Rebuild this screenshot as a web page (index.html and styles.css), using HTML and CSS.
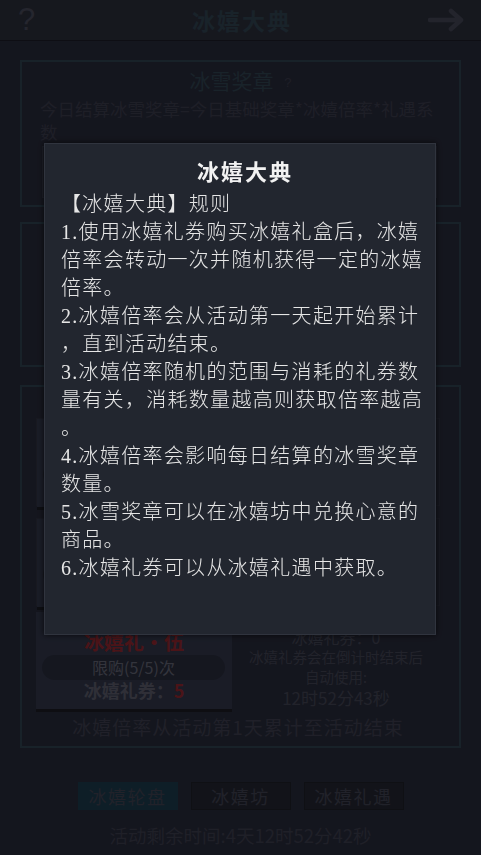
FILE: index.html
```html
<!DOCTYPE html>
<html lang="zh-CN">
<head>
    <meta charset="UTF-8">
    <meta name="viewport" content="width=device-width, initial-scale=1.0">
    <title>冰嬉大典</title>
    <link rel="stylesheet" href="styles.css">
</head>
<body>

    <div class="page">
        <div class="topbar">
            <span class="help">?</span>
            <h1 class="topbar-title">冰嬉大典</h1>
            <svg class="next" width="38" height="24" viewBox="0 0 38 24">
                <path d="M2 12 H33 M23 3 L33 12 L23 21" fill="none" stroke="currentColor" stroke-width="4.5" stroke-linecap="round" stroke-linejoin="round"/>
            </svg>
        </div>

        <div class="card medal">
            <div class="card-title">冰雪奖章 <span class="tip">?</span></div>
            <p class="formula">今日结算冰雪奖章=今日基础奖章*冰嬉倍率*礼遇系数</p>
            <div class="medal-box">今日基础奖章：120　冰嬉倍率：1.35</div>
        </div>

        <div class="card rate">
            <div class="card-title">冰嬉倍率</div>
            <div class="rate-value">x1.35</div>
            <div class="rate-note">今日可获得冰雪奖章：162</div>
        </div>

        <div class="card gifts">
            <div class="card-title">冰嬉礼盒</div>

            <div class="row sold">
                <div class="item">
                    <div class="item-name">冰嬉礼·壹</div>
                    <div class="item-limit">限购(1/1)次</div>
                    <div class="item-price">冰嬉礼券：<span class="red">1</span></div>
                </div>
                <div class="info">已购买</div>
            </div>

            <div class="row sold">
                <div class="item">
                    <div class="item-name">冰嬉礼·叁</div>
                    <div class="item-limit">限购(3/3)次</div>
                    <div class="item-price">冰嬉礼券：<span class="red">3</span></div>
                </div>
                <div class="info">已购买</div>
            </div>

            <div class="row">
                <div class="item">
                    <div class="item-name">冰嬉礼·伍</div>
                    <div class="item-limit">限购(5/5)次</div>
                    <div class="item-price">冰嬉礼券：<span class="red">5</span></div>
                </div>
                <div class="info">
                    <div>冰嬉礼券：0</div>
                    <div class="small">冰嬉礼券会在倒计时结束后</div>
                    <div class="small">自动使用:</div>
                    <div class="timer">12时52分43秒</div>
                </div>
            </div>

            <div class="gifts-note">冰嬉倍率从活动第1天累计至活动结束</div>
        </div>

        <div class="tabs">
            <div class="tab active">冰嬉轮盘</div>
            <div class="tab">冰嬉坊</div>
            <div class="tab">冰嬉礼遇</div>
        </div>

        <div class="countdown">活动剩余时间:4天12时52分42秒</div>
    </div>

    <div class="mask">
        <div class="dialog">
            <h2>冰嬉大典</h2>
            <div class="rules">
                <p>【冰嬉大典】规则</p>
                <p>1.使用冰嬉礼券购买冰嬉礼盒后，冰嬉倍率会转动一次并随机获得一定的冰嬉倍率。</p>
                <p>2.冰嬉倍率会从活动第一天起开始累计，直到活动结束。</p>
                <p>3.冰嬉倍率随机的范围与消耗的礼券数量有关，消耗数量越高则获取倍率越高。</p>
                <p>4.冰嬉倍率会影响每日结算的冰雪奖章数量。</p>
                <p>5.冰雪奖章可以在冰嬉坊中兑换心意的商品。</p>
                <p>6.冰嬉礼券可以从冰嬉礼遇中获取。</p>
            </div>
        </div>
    </div>

</body>
</html>
```

FILE: styles.css
```css
body {
    margin: 0;
    background-color: #34374b;
    font-family: "Noto Sans CJK SC", sans-serif;
    color: #4c4e63;
}
.page {
    height: 855px;
    overflow: hidden;
}

/* top bar */
.topbar {
    height: 40px;
    border-bottom: 1px solid #232532;
    background-color: #393c4d;
    display: grid;
    grid-template-columns: 1fr auto 1fr;
    align-items: center;
    padding: 0 15px 0 18px;
}
.help {
    justify-self: start;
    font-family: "Liberation Sans", sans-serif;
    font-size: 31px;
    line-height: 40px;
    color: #5c5f73;
}
.topbar-title {
    margin: 0;
    font-size: 23px;
    font-weight: bold;
    letter-spacing: 2px;
    color: #3f5769;
}
.next {
    justify-self: end;
    color: #585b6f;
}

/* cards */
.card {
    box-sizing: border-box;
    margin: 0 20px;
    border: 2px solid #3c5668;
}
.card-title {
    text-align: center;
    font-size: 21px;
    line-height: 24px;
    color: #3f5769;
}
.tip {
    font-family: "Liberation Sans", sans-serif;
    font-size: 13px;
    vertical-align: middle;
    margin-left: 6px;
    color: #4c4e63;
}
.medal {
    margin-top: 19px;
    height: 147px;
    padding: 6px 18px 0;
}
.formula {
    margin: 2px 0 0;
    font-size: 17.5px;
    line-height: 23px;
}
.medal-box {
    margin: 3px 4px 0 2px;
    height: 50px;
    line-height: 50px;
    text-align: center;
    background-color: #3e4257;
    border: 1px solid #4a4e66;
}
.rate {
    margin-top: 15px;
    height: 145px;
    padding: 8px 18px 0;
    text-align: center;
}
.rate-value {
    font-size: 44px;
    line-height: 64px;
    font-weight: bold;
    color: #c83741;
}
.rate-note {
    font-size: 16px;
}
.gifts {
    margin-top: 18px;
    padding: 4px 19px 4px 14px;
}
.gifts .card-title {
    line-height: 27px;
}
.row {
    display: grid;
    grid-template-columns: 196px 1fr;
    height: 88px;
    margin-bottom: 12px;
}
.row.sold {
    box-sizing: border-box;
    border: 1px solid #3c3f52;
}
.row.sold + .row.sold {
    margin-bottom: 6px;
}
.row:not(.sold) {
    height: 94px;
    margin-bottom: 6px;
}
.item {
    box-sizing: border-box;
    padding-top: 19px;
    background-color: #414760;
    box-shadow: 0 3px 0 #23252f;
    text-align: center;
    color: #808296;
}
.item-name {
    font-size: 20px;
    font-weight: bold;
    line-height: 22px;
    color: #bb323c;
}
.item-limit {
    margin: 2px 7px 0 6px;
    height: 25px;
    line-height: 25px;
    font-size: 16px;
    border-radius: 13px;
    background-color: #363a4e;
}
.item-price {
    font-size: 18px;
    line-height: 20px;
    font-weight: bold;
    color: #75778b;
}
.red {
    color: #bb323c;
}
.info {
    padding-top: 15px;
    text-align: center;
    font-size: 16px;
    line-height: 20px;
    color: #56596d;
}
.sold .info {
    padding-top: 0;
    line-height: 86px;
}
.info .small {
    font-size: 14.5px;
}
.info .timer {
    font-size: 17px;
    line-height: 22px;
}
.gifts-note {
    text-align: center;
    font-size: 19px;
    letter-spacing: 1px;
    line-height: 30px;
    color: #505266;
}

/* tabs */
.tabs {
    margin-top: 34px;
    display: flex;
    justify-content: center;
    gap: 13px;
}
.tab {
    width: 100px;
    height: 28px;
    box-sizing: border-box;
    line-height: 26px;
    text-align: center;
    font-size: 18px;
    letter-spacing: 1.5px;
    background-color: #2f3140;
    border: 1px solid #262834;
    color: #535669;
}
.tab.active {
    background-color: #254b62;
    border-color: #254b62;
}
.countdown {
    margin-top: 12px;
    text-align: center;
    font-size: 18.5px;
    line-height: 26px;
    color: #4e5064;
}

/* rules dialog */
.mask {
    position: fixed;
    top: 0;
    left: 0;
    right: 0;
    bottom: 0;
    background-color: rgba(0, 0, 0, 0.6);
    display: flex;
    flex-direction: column;
    align-items: center;
    padding-top: 143px;
}
.dialog {
    box-sizing: border-box;
    width: 392px;
    height: 492px;
    margin-left: -1px;
    padding: 11px 6px 0 16px;
    background-color: #22262f;
    border: 1px solid #30343e;
    box-shadow: 0 0 6px rgba(0, 0, 0, 0.7);
    color: #e6e6e6;
}
.dialog h2 {
    margin: 0;
    text-align: center;
    font-size: 22px;
    line-height: 30px;
    letter-spacing: 2px;
    font-weight: bold;
    color: #f2f2f2;
}
.rules {
    margin-top: 5px;
    width: 368px;
    font-family: "Liberation Serif", "Noto Sans CJK SC", serif;
    font-size: 20px;
    font-weight: 300;
    letter-spacing: 1.3px;
    line-height: 28px;
    line-break: anywhere;
}
.rules p {
    margin: 0;
}
```
